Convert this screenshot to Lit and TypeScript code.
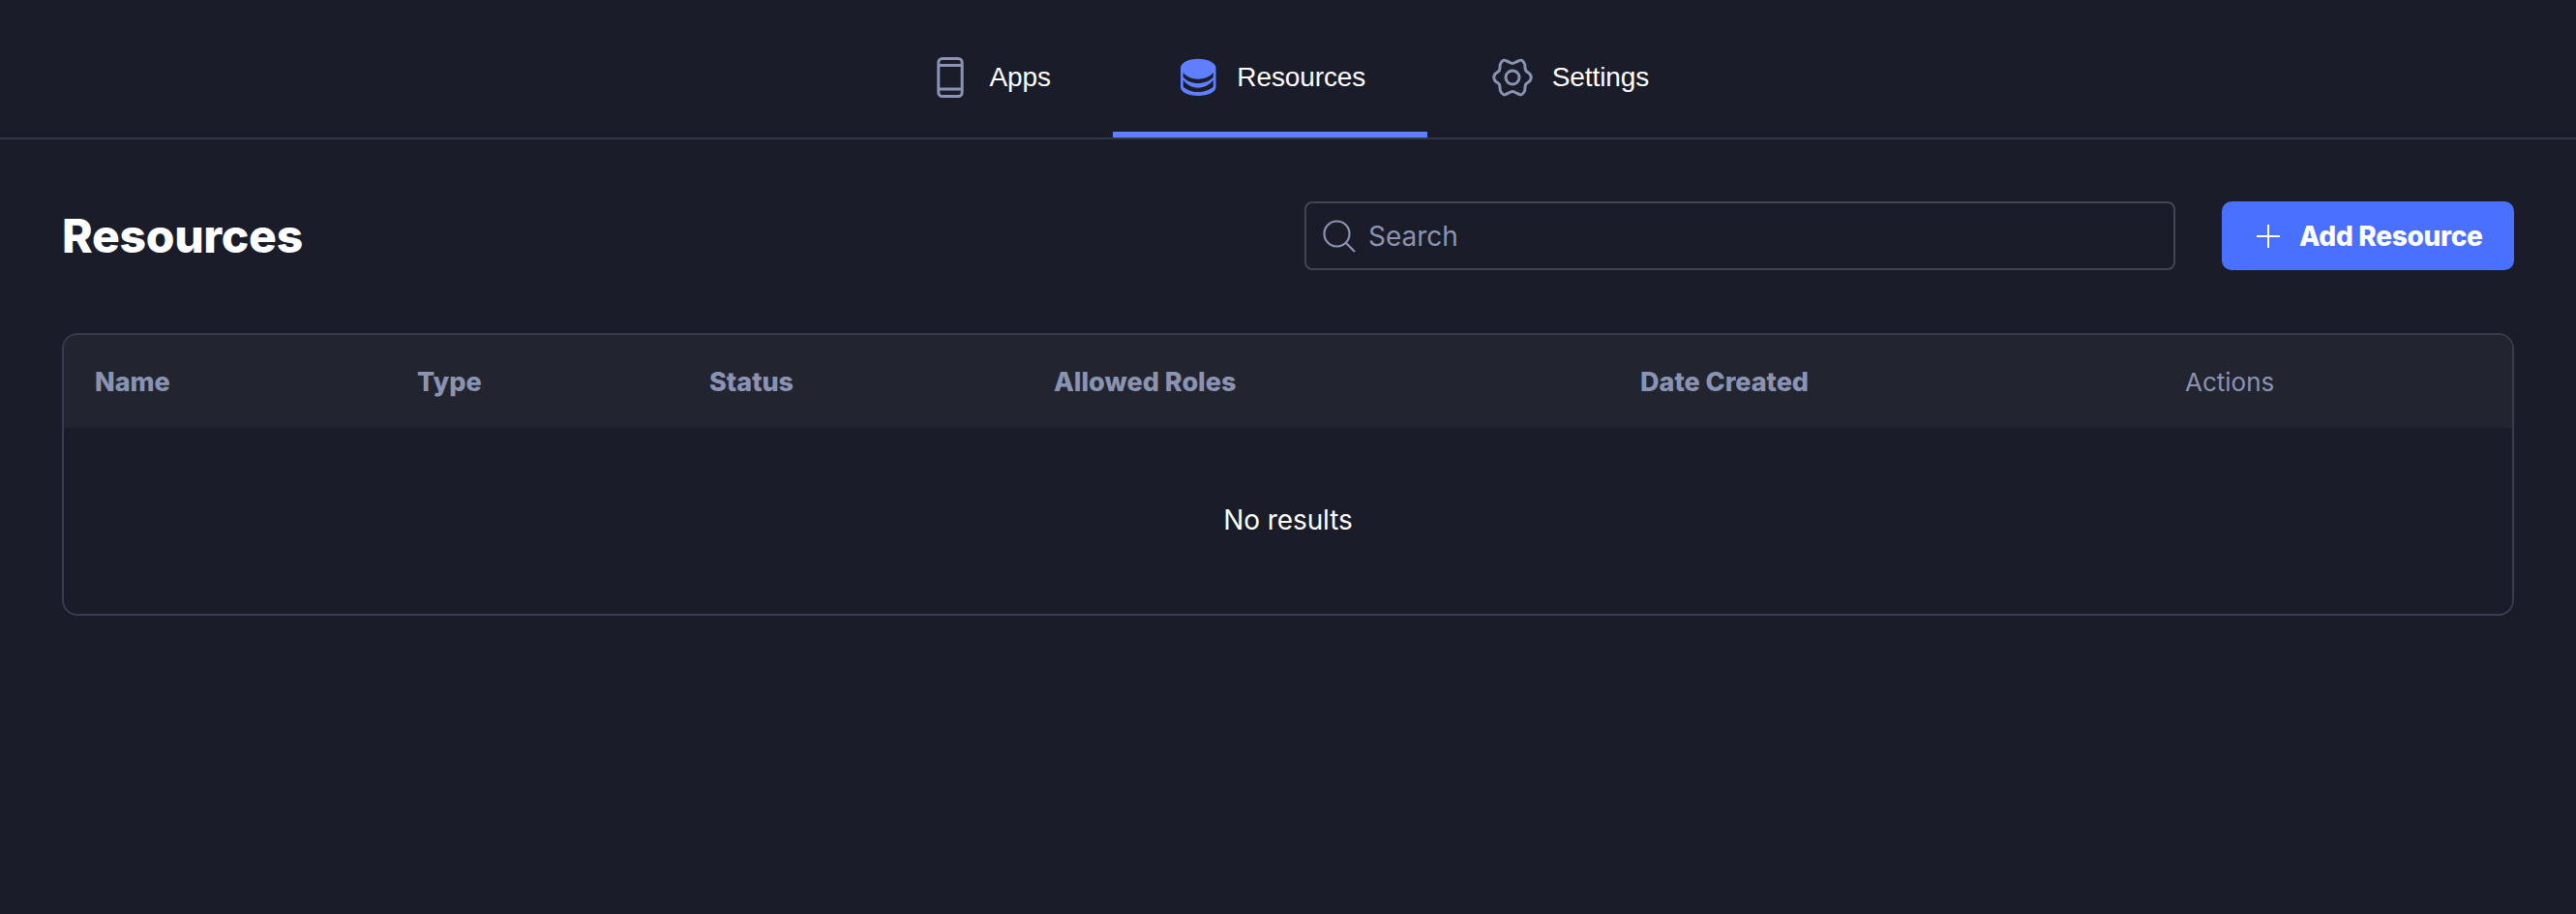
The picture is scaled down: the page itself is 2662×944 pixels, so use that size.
import { LitElement, html, css } from 'lit';
import { customElement } from 'lit/decorators.js';

const columns = [
  { label: 'Name', width: 333 },
  { label: 'Type', width: 302 },
  { label: 'Status', width: 356 },
  { label: 'Allowed Roles', width: 606 },
  { label: 'Date Created', width: 563 },
];

// smooth closed curve through the points, used for the gear outline
function smooth(pts: number[][]) {
  const n = pts.length;
  let d = `M${pts[0][0]} ${pts[0][1]}`;
  for (let i = 0; i < n; i++) {
    const p0 = pts[(i - 1 + n) % n];
    const p1 = pts[i];
    const p2 = pts[(i + 1) % n];
    const p3 = pts[(i + 2) % n];
    const c1x = (p1[0] + (p2[0] - p0[0]) / 6).toFixed(2);
    const c1y = (p1[1] + (p2[1] - p0[1]) / 6).toFixed(2);
    const c2x = (p2[0] - (p3[0] - p1[0]) / 6).toFixed(2);
    const c2y = (p2[1] - (p3[1] - p1[1]) / 6).toFixed(2);
    d += `C${c1x} ${c1y} ${c2x} ${c2y} ${p2[0]} ${p2[1]}`;
  }
  return d + 'Z';
}

const gear = smooth([
  [24, 9.5], [29, 7.5], [33, 6.2], [36.5, 10], [37.5, 16.5], [42, 20.5], [43.2, 24],
  [42, 27.5], [37.5, 31.5], [36.5, 38], [33, 41.8], [29, 40.5], [24, 38.5],
  [19, 40.5], [15, 41.8], [11.5, 38], [10.5, 31.5], [6, 27.5], [4.8, 24],
  [6, 20.5], [10.5, 16.5], [11.5, 10], [15, 6.2], [19, 7.5],
]);

@customElement('app-root')
export class AppRoot extends LitElement {
  static styles = css`
    :host {
      display: block;
      min-height: 944px;
      background: #1a1c29;
      color: #fff;
      font-family: Inter, 'Noto Sans', sans-serif;
    }

    .nav {
      display: flex;
      justify-content: center;
      height: 144px;
      box-sizing: border-box;
      border-bottom: 2px solid #32364a;
    }

    .tab {
      display: flex;
      align-items: center;
      gap: 16.5px;
      height: 142px;
      box-sizing: border-box;
      padding: 24px 64px 0;
      font-family: 'Liberation Sans', Arial, sans-serif;
      font-size: 28px;
      letter-spacing: -0.1px;
      border-bottom: 6px solid transparent;
    }

    .tab.active {
      border-bottom-color: #5f7fff;
    }

    .tab svg {
      width: 48px;
      height: 48px;
      flex: none;
    }

    .content {
      padding: 64px 64px 0;
    }

    .toolbar {
      display: flex;
      align-items: center;
      height: 71px;
    }

    h1 {
      margin: 0 auto 0 0;
      font-size: 48px;
      font-weight: 800;
      letter-spacing: -0.3px;
    }

    .search {
      display: flex;
      align-items: center;
      gap: 13px;
      width: 900px;
      height: 71px;
      box-sizing: border-box;
      border: 2px solid #44464f;
      border-radius: 8px;
      padding: 0 17px;
      color: #8a93b2;
      font-size: 28px;
    }

    .search svg {
      width: 34px;
      height: 34px;
      flex: none;
    }

    .add {
      display: flex;
      align-items: center;
      gap: 20px;
      width: 302px;
      height: 71px;
      box-sizing: border-box;
      margin-left: 48px;
      padding-left: 36px;
      background: #4a70ff;
      border-radius: 10px;
      font-size: 28px;
      font-weight: 800;
      letter-spacing: -0.3px;
    }

    .add svg {
      width: 24px;
      height: 24px;
      flex: none;
    }

    .table {
      margin-top: 65px;
      height: 292px;
      box-sizing: border-box;
      border: 2px solid #393c50;
      border-radius: 16px;
      overflow: hidden;
    }

    .head {
      display: flex;
      align-items: center;
      height: 96px;
      background: #22252f;
      color: #8a93b2;
      font-size: 27px;
      font-weight: 800;
    }

    .cell {
      flex: none;
      padding-left: 32px;
      box-sizing: border-box;
    }

    .actions {
      font-size: 26px;
      font-weight: 400;
    }

    .empty {
      display: flex;
      align-items: center;
      justify-content: center;
      height: 190px;
      font-size: 28px;
      letter-spacing: -0.1px;
    }
  `;

  render() {
    return html`
      <nav class="nav">
        <div class="tab">
          <svg viewBox="0 0 48 48" fill="none" stroke="#8a93b2" stroke-width="3">
            <rect x="11.800" y="4.500" width="24.400" height="39" rx="4"></rect>
            <path d="M12 11.500h24M12 36h24"></path>
          </svg>
          Apps
        </div>
        <div class="tab active">
          <svg viewBox="0 0 48 48">
            <path fill="#5f7fff" d="M6 14C6 9 14 4.700 24 4.700S42.500 9 42.500 14V34C42.500 39 34 43 24 43S6 39 6 34Z"></path>
            <path fill="#1a1c29" d="M8.700 19C12 23.500 18 25.700 24 25.700S36.500 23.500 39.800 19V23.500C36.500 27.800 30 30 24 30S12 27.800 8.700 23.500Z"></path>
            <path fill="#1a1c29" d="M8.700 26.500C12 31.500 18 34.700 24 34.700S36.500 31.500 39.800 26.500V33.500C36.500 37 30 39 24 39S12 37 8.700 33.500Z"></path>
          </svg>
          Resources
        </div>
        <div class="tab">
          <svg viewBox="0 0 48 48" fill="none" stroke="#8a93b2" stroke-width="3" stroke-linejoin="round">
            <circle cx="24" cy="24" r="7"></circle>
            <path d=${gear}></path>
          </svg>
          Settings
        </div>
      </nav>
      <main class="content">
        <div class="toolbar">
          <h1>Resources</h1>
          <div class="search">
            <svg viewBox="0 0 34 34" fill="none" stroke="#8a93b2" stroke-width="2.200">
              <circle cx="14.500" cy="14.500" r="13"></circle>
              <path d="M24 24l9 9"></path>
            </svg>
            Search
          </div>
          <div class="add">
            <svg viewBox="0 0 24 24" fill="none" stroke="#fff" stroke-width="2"><path d="M12 0v24M0 12h24"></path></svg>
            Add Resource
          </div>
        </div>
        <section class="table">
          <div class="head">
            ${columns.map(
              (col) => html`<div class="cell" style="width:${col.width}px">${col.label}</div>`
            )}
            <div class="cell actions">Actions</div>
          </div>
          <div class="empty">No results</div>
        </section>
      </main>
    `;
  }
}
